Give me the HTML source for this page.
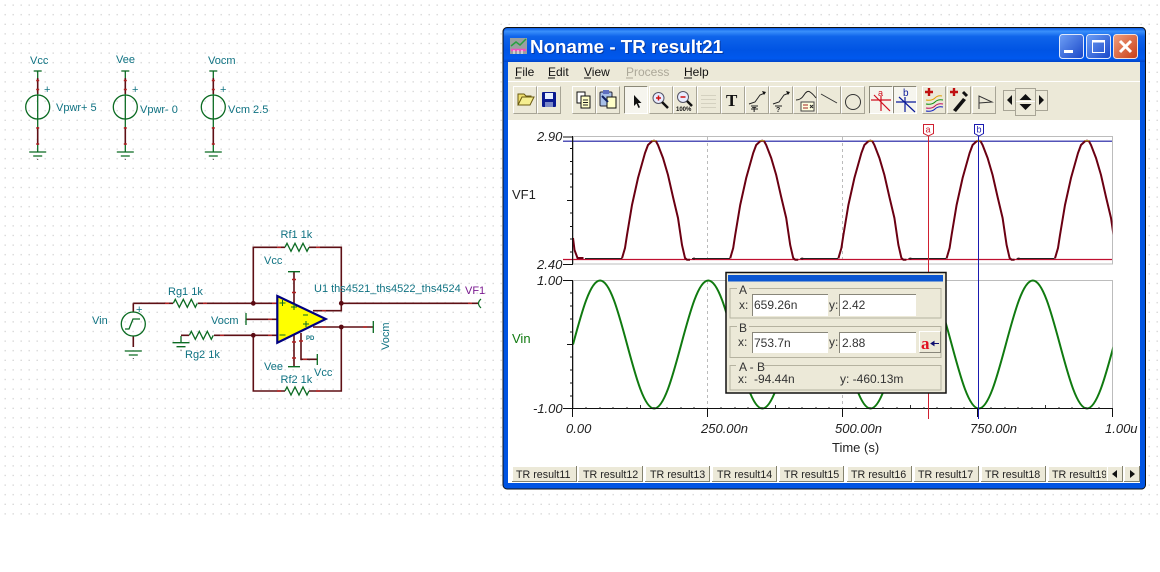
<!DOCTYPE html>
<html><head><meta charset="utf-8"><title>Noname - TR result21</title>
<style>
html,body{margin:0;padding:0;background:#fff;width:1160px;height:572px;overflow:hidden}
svg{display:block}
text{font-family:"Liberation Sans",sans-serif}
.s{font-size:11px;fill:#0f7282}
.m{font-size:12px;fill:#111}
.ax{font-size:13px;fill:#222;font-style:italic}
.t{font-size:10.7px;fill:#222}
.w{stroke:#5e0f14;stroke-width:1.6;fill:none}
.g{stroke:#0b6b22;stroke-width:1.3;fill:none}
.r{stroke:#b02020;stroke-width:1.4;fill:none}
.d{font-size:12px;fill:#333}
</style></head><body>
<svg width="1160" height="572" viewBox="0 0 1160 572" xmlns="http://www.w3.org/2000/svg">
<defs>
<pattern id="dots" x="0" y="0" width="8" height="9.6" patternUnits="userSpaceOnUse"><rect x="4.5" y="4.5" width="1.4" height="1.2" fill="#d2d2d2"/></pattern>
<linearGradient id="tb" x1="0" y1="0" x2="0" y2="1"><stop offset="0" stop-color="#0a5be4"/><stop offset=".1" stop-color="#3a90fb"/><stop offset=".25" stop-color="#0f64ea"/><stop offset=".65" stop-color="#0054e4"/><stop offset=".9" stop-color="#0058ee"/><stop offset="1" stop-color="#0044c8"/></linearGradient>
<linearGradient id="bb" x1="0" y1="0" x2="1" y2="1"><stop offset="0" stop-color="#6fa0f5"/><stop offset="1" stop-color="#1846c8"/></linearGradient>
<linearGradient id="bc" x1="0" y1="0" x2="1" y2="1"><stop offset="0" stop-color="#f0a080"/><stop offset="1" stop-color="#c83c14"/></linearGradient>
<clipPath id="c1"><rect x="573" y="130" width="539.5" height="136"/></clipPath>
<clipPath id="c2"><rect x="573" y="275" width="539.5" height="136"/></clipPath>
<g id="hump"><path d="M-32 258.3L-29 248-27 235-22 205-16 178-9 153-6 145-2 141.3 0 140.7 2 141.3 4 145 9 158 14 175 19 197 24 218 28 245 31 258 33 259.8 36 259.8 M39 258.6h2" fill="none" stroke="#6b0012" stroke-width="2"/><path d="M-2 140.7h4" stroke="#b8b030" stroke-width="1" fill="none"/><path d="M38 258.5H76" stroke="#222" stroke-width="1"/></g>
<path id="res" d="M0 0l2-4 4 8 4-8 4 8 4-8 4 8 2-4" fill="none" stroke="#0b6b22" stroke-width="1.3"/>
<g id="gnd"><path d="M-8.500 0h17M-4.500 4h9" class="g"/><rect x="-.5" y="7" width="1" height="1" fill="#444"/></g>
<g id="src"><path d="M-4 0h8" class="g"/><path d="M0 0v7" class="g"/><path d="M0 7V23" class="w"/><path d="M-1.500 9.500h3M-1.500 18.500h3" class="r"/><circle cx="0" cy="36" r="12" class="g"/><path d="M0 23V49" class="g"/><path d="M0 49v7" class="g"/><path d="M0 56V74" class="w"/><path d="M-1.500 57h3M-1.500 73h3" class="r"/><path d="M0 74v7" class="g"/><use href="#gnd" y="81"/></g>
<g id="tb1"><rect x="0" y="0" width="24" height="28" fill="#ece9d8"/><path d="M.5 27.500V.5H23.500" fill="none" stroke="#fff"/><path d="M.5 27.500H23.500V.5" fill="none" stroke="#a8a596"/></g>
<g id="tbp"><rect x="0" y="0" width="24" height="28" fill="#f6f5ee"/><path d="M.5 27.500V.5H23.500" fill="none" stroke="#8a8878"/><path d="M.5 27.500H23.500V.5" fill="none" stroke="#fff"/></g>
</defs>
<rect width="1160" height="572" fill="#fff"/>
<rect width="1160" height="520" fill="url(#dots)"/>

<!-- Power sources -->
<use href="#src" x="37.700" y="71"/><use href="#src" x="125.300" y="71"/><use href="#src" x="213.300" y="71"/>
<text class="s" x="30" y="64">Vcc</text><text class="s" x="116" y="63">Vee</text><text class="s" x="208" y="64">Vocm</text>
<text class="s" x="56" y="111">Vpwr+ 5</text><text class="s" x="140" y="113">Vpwr- 0</text><text class="s" x="228" y="113">Vcm 2.5</text>
<text class="s" x="44" y="93">+</text><text class="s" x="132" y="93">+</text><text class="s" x="220" y="93">+</text>

<!-- Amp circuit wires -->
<path class="w" d="M133.300 303.300H173M198 303.300H277M253.300 303.300V247.300H285M309 247.300H341.300V310.700H313M341.300 303.300H478M181 335.300H189M214 335.300H277M253.300 335.300V391H285M309 391H341.300V327H313M341.300 327H373M246 319.300H277M294 272V304M294 333V367M301 333V359.300H317"/>
<path class="r" d="M165 303.300h4M203 303.300h4M272 303.300h4M277 247.300h4M316 247.300h4M277 391h4M316 391h4M220 335.300h4M268 335.300h4M268 319.300h4M322 310.700h4M322 327h4M363 327h4M468 303.300h4M292 279.500h4M292 292.500h4M292 342h4M292 358h4M299 341h4M303 359.300h4"/>
<path class="g" d="M288 271.700h12M288 366.700h12M246 313v12M373.300 321v12M317.300 354v11"/>
<use href="#res" x="285" y="247.300"/><use href="#res" x="285" y="391"/><use href="#res" x="173.300" y="303.300"/><use href="#res" x="189.300" y="335.300"/>
<use href="#gnd" x="181" y="342.700"/><path class="g" d="M181 336V343"/>
<circle cx="253.300" cy="303.300" r="2.400" fill="#5a0a12"/><circle cx="341.300" cy="303.300" r="2.400" fill="#5a0a12"/><circle cx="253.300" cy="335.300" r="2.400" fill="#5a0a12"/><circle cx="341.300" cy="327" r="2.400" fill="#5a0a12"/>
<path d="M481 299Q476 303.300 481 308" fill="none" stroke="#0b6b22" stroke-width="1.200"/>
<polygon points="277.300,296 277.300,342.700 325.700,319" fill="#ffff00" stroke="#000080" stroke-width="2.200"/>
<path d="M279.500 303h6M282.500 300v6M291 307h6M294 304v6M303 315h5M303 324h6M306 321v6M279.500 335h6" stroke="#0b6b22" stroke-width="1" fill="none"/>
<!-- Vin -->
<path class="w" d="M133.300 303.300V312M133.300 336V347"/>
<circle cx="133.300" cy="324" r="12" class="g"/>
<path class="g" d="M125 329h4l4-10h7" stroke-width="1.500"/>
<use href="#gnd" x="133.300" y="351"/>
<text class="s" x="136" y="313">+</text>
<text class="s" x="92" y="324">Vin</text><text class="s" x="168" y="295">Rg1 1k</text><text class="s" x="185" y="358">Rg2 1k</text><text class="s" x="280.500" y="238">Rf1 1k</text><text class="s" x="280.500" y="383">Rf2 1k</text>
<text class="s" x="264" y="264">Vcc</text><text class="s" x="211" y="324">Vocm</text><text class="s" x="264" y="370">Vee</text><text class="s" x="314" y="376">Vcc</text>
<text class="s" x="314" y="292">U1 ths4521_ths4522_ths4524</text>
<text x="465" y="294" style="font-size:11px;fill:#7a1a90">VF1</text>
<text x="306" y="340" style="font-size:6px;font-weight:bold;fill:#0f7282">PD</text>
<text class="s" transform="translate(389,350) rotate(-90)">Vocm</text>

<!-- Window -->
<rect x="503" y="27.500" width="642.500" height="461.500" rx="4" fill="#0054e3" stroke="#111" stroke-width="1"/>
<path d="M504 62V33q0-5 5-5H1140q5 0 5 5V62Z" fill="url(#tb)"/>
<rect x="508" y="62" width="632" height="58" fill="#ece9d8"/>
<rect x="508" y="81" width="632" height="1" fill="#fff"/>
<rect x="508" y="120" width="632" height="363" fill="#fff"/>
<rect x="1146.500" y="28" width="1" height="462" fill="#fff"/>
<!-- title icon -->
<rect x="510" y="38" width="17" height="16" fill="#9aa0a0"/><path d="M511 46l5-4 4 3 6-6" stroke="#28a040" fill="none" stroke-width="1.500"/><path d="M511 50h15" stroke="#f050c0" stroke-width="2.500"/><path d="M514 50v4M518 50v4M522 50v4" stroke="#fff" stroke-width="1"/>
<text x="531" y="54" style="font-size:18.800px;font-weight:bold;fill:#0a2a80" opacity=".7">Noname - TR result21</text>
<text x="530" y="53" style="font-size:18.800px;font-weight:bold;fill:#fff">Noname - TR result21</text>
<!-- title buttons -->
<rect x="1059.500" y="34.500" width="24" height="24" rx="3" fill="url(#bb)" stroke="#dfe8fb"/><rect x="1064" y="50" width="9" height="3" fill="#fff"/>
<rect x="1086.500" y="34.500" width="24" height="24" rx="3" fill="url(#bb)" stroke="#dfe8fb"/><rect x="1092.500" y="41.500" width="12" height="11" fill="none" stroke="#fff" stroke-width="1"/><rect x="1092" y="40" width="13" height="2.500" fill="#fff"/>
<rect x="1113.500" y="34.500" width="24" height="24" rx="3" fill="url(#bc)" stroke="#f3e0da"/><path d="M1120 41l11 11M1131 41l-11 11" stroke="#fff" stroke-width="3"/>
<!-- menu -->
<text class="m" x="515" y="76">File</text><path d="M515 78h6" stroke="#111"/>
<text class="m" x="548" y="76">Edit</text><path d="M548 78h7" stroke="#111"/>
<text class="m" x="584" y="76">View</text><path d="M584 78h7" stroke="#111"/>
<text x="626" y="76" style="font-size:12px;fill:#aca899">Process</text><path d="M626 78h7" stroke="#aca899"/>
<text class="m" x="684" y="76">Help</text><path d="M684 78h8" stroke="#111"/>
<!-- toolbar buttons -->
<use href="#tb1" x="513" y="86"/><use href="#tb1" x="537" y="86"/>
<use href="#tb1" x="572" y="86"/><use href="#tb1" x="596" y="86"/>
<use href="#tbp" x="624" y="86"/>
<use href="#tb1" x="649" y="86"/><use href="#tb1" x="673" y="86"/><use href="#tb1" x="697" y="86"/><use href="#tb1" x="721" y="86"/><use href="#tb1" x="745" y="86"/><use href="#tb1" x="769" y="86"/><use href="#tb1" x="793" y="86"/><use href="#tb1" x="817" y="86"/><use href="#tb1" x="841" y="86"/>
<use href="#tbp" x="869" y="86"/><use href="#tbp" x="893" y="86"/>
<use href="#tb1" x="922" y="86"/><use href="#tb1" x="947" y="86"/><use href="#tb1" x="972" y="86"/>
<rect x="1003.500" y="90.500" width="12" height="20" fill="#ece9d8" stroke="#a8a596"/><rect x="1035.500" y="90.500" width="12" height="20" fill="#ece9d8" stroke="#a8a596"/>
<rect x="1015.500" y="88.500" width="20" height="27" fill="#ece9d8" stroke="#a8a596"/><path d="M1016 101.500h19" stroke="#fff"/>
<path d="M1007 100l5-5v10zM1044 100l-5-5v10zM1025.500 94l6 6h-12zM1025.500 110l6-6h-12z" fill="#111"/>
<!-- icons -->
<path d="M518 105V94h6l2 2h5v2" fill="#f0e070" stroke="#6a5a10"/><path d="M518 105l4-8h12l-4 8z" fill="#f5ee90" stroke="#6a5a10"/>
<rect x="542" y="92" width="14" height="15" rx="1" fill="#0a1a90"/><rect x="545" y="93" width="8" height="6" fill="#e8f0ff"/><rect x="545" y="102" width="8" height="5" fill="#7a88c8"/>
<rect x="577" y="92" width="8" height="11" fill="#fff" stroke="#111"/><rect x="581" y="96" width="9" height="12" fill="#ffffc8" stroke="#111"/><path d="M583 100h5M583 102.500h5M583 105h5" stroke="#222"/>
<rect x="600" y="92" width="12" height="14" rx="1" fill="#a8c0e8" stroke="#223"/><rect x="603" y="90" width="6" height="4" fill="#6070c0"/><rect x="607" y="97" width="9" height="11" fill="#ffffc8" stroke="#111"/><path d="M602 96l6 6" stroke="#102060" stroke-width="2"/>
<path d="M634 95v11l2.500-2.500 2 4.500 1.500-.8-2-4.200h3.500z" fill="#111"/>
<circle cx="658.500" cy="98" r="5.500" fill="#e8ecff" stroke="#556"/><path d="M656 98h5M658.500 95.500v5" stroke="#d01010" stroke-width="1.500"/><path d="M662 102l6 6" stroke="#111" stroke-width="2.500"/>
<circle cx="683" cy="97" r="5.500" fill="#e8ecff" stroke="#556"/><path d="M680.500 97h5" stroke="#d01010" stroke-width="1.500"/><path d="M687 101l5 5" stroke="#111" stroke-width="2.500"/><text x="676" y="111" style="font-size:6px;font-weight:bold;fill:#111">100%</text>
<g fill="#d4d1c0"><rect x="701" y="95" width="15" height="1"/><rect x="701" y="99" width="15" height="1"/><rect x="701" y="103" width="15" height="1"/><rect x="701" y="107" width="15" height="1"/></g>
<text x="726" y="106" style="font-family:'Liberation Serif',serif;font-size:17px;font-weight:bold;fill:#111">T</text>
<path d="M749 104l6-2 5-7 5-2M751 106h7M751 109h7" fill="none" stroke="#222"/><path d="M762 91l4 1-2 3z" fill="#111"/><text x="752" y="112" style="font-size:7px;font-weight:bold;fill:#222">T</text>
<path d="M773 104l6-2 5-7 5-2M775 106h7" fill="none" stroke="#222"/><path d="M786 91l4 1-2 3z" fill="#111"/><text x="776" y="112" style="font-size:7px;font-weight:bold;fill:#222">?</text>
<path d="M796 100q5 0 8-5 3-5 6-3 3 2 6 6" fill="none" stroke="#222"/><rect x="801" y="102" width="13" height="9" fill="#ffffe0" stroke="#444"/><path d="M803 105h5M803 108h5" stroke="#a02020"/><path d="M810 105l3 3M813 105l-3 3" stroke="#222"/>
<path d="M821 94l16 9" stroke="#333"/>
<circle cx="853" cy="102" r="7.500" fill="none" stroke="#333"/>
<path d="M871 100h20M874 95l16 16M881 96v15" stroke="#d01020" stroke-width="1.200" fill="none"/><text x="878" y="96" style="font-size:9px;fill:#d01020">a</text>
<path d="M896 102h20M899 97l16 15M905 97v15" stroke="#0a1a9a" stroke-width="1.200" fill="none"/><text x="903" y="96" style="font-size:10px;fill:#0a1a9a">b</text>
<path d="M925 92h8M929 88v8" stroke="#c01010" stroke-width="2.400"/>
<path d="M926 100q6 1 9-2t7-2" stroke="#e0a000" fill="none"/><path d="M926 104q6 1 9-2t8-2" stroke="#109010" fill="none"/><path d="M926 108q6 1 9-2t8-2" stroke="#c01060" fill="none"/><path d="M926 111q6 1 9-2t8-2" stroke="#1020c0" fill="none"/>
<path d="M950 92h8M954 88v8" stroke="#c01010" stroke-width="2.400"/><path d="M953 110l10-12 3 2-10 12z" fill="#111"/><path d="M963 92l4 4" stroke="#111" stroke-width="3"/>
<path d="M979 109V96l13 6-13 1" fill="none" stroke="#333"/>

<!-- Plot 1 -->
<rect x="573.500" y="136.500" width="539" height="127.500" fill="#fff" stroke="#bcbcbc"/>
<path d="M707.500 137V263M842.500 137V263" stroke="#bbb" stroke-dasharray="3 3"/>
<path d="M563 141.200H1112" stroke="#1a1aa0" stroke-width="1.200"/>
<path d="M563 259.500H1112" stroke="#c01030" stroke-width="1.200"/>
<g clip-path="url(#c1)"><path d="M573 238l1.500 12 3 8h6" stroke="#6b0012" fill="none" stroke-width="2"/><path d="M585 258.500H622" stroke="#222"/>
<use href="#hump" x="654"/><use href="#hump" x="762.200"/><use href="#hump" x="870.400"/><use href="#hump" x="978.600"/><use href="#hump" x="1087"/></g>
<path d="M572.500 136V264" stroke="#111"/><path d="M563 137h10M563 264.500h10" stroke="#111"/>
<path d="M570 148.500h2.500M570 161.500h2.500M570 174h2.500M570 187h2.500M567 200.500h5.500M570 213h2.500M570 226.500h2.500M570 239h2.500M570 252h2.500" stroke="#111"/>
<text class="ax" x="537" y="141">2.90</text><text class="ax" x="537" y="269">2.40</text>
<text x="512" y="199" style="font-size:13px;fill:#222">VF1</text>

<!-- Plot 2 -->
<rect x="573.500" y="280.500" width="539" height="128" fill="#fff" stroke="#bcbcbc"/>
<path d="M707.500 281V408M842.500 281V408" stroke="#bbb" stroke-dasharray="3 3"/>
<g clip-path="url(#c2)"><path fill="none" stroke="#107a10" stroke-width="2" d="M573 344.500c8.820-32.800 17.260-64 27.050-64c9.790 0 18.230 31.200 27.050 64c8.820 32.800 17.260 64 27.050 64c9.790 0 18.230-31.200 27.050-64c8.820-32.800 17.260-64 27.050-64c9.790 0 18.230 31.200 27.050 64c8.820 32.800 17.260 64 27.050 64c9.790 0 18.230-31.200 27.050-64c8.820-32.800 17.260-64 27.050-64c9.790 0 18.230 31.200 27.050 64c8.820 32.800 17.260 64 27.050 64c9.790 0 18.230-31.200 27.050-64c8.820-32.800 17.260-64 27.050-64c9.790 0 18.230 31.200 27.050 64c8.820 32.800 17.260 64 27.050 64c9.790 0 18.230-31.200 27.050-64c8.820-32.800 17.260-64 27.050-64c9.790 0 18.230 31.200 27.050 64c8.820 32.800 17.260 64 27.050 64c9.790 0 18.230-31.200 27.050-64"/></g>
<path d="M572.500 280V417" stroke="#111"/><path d="M563 280.500h10M563 408.500H1112.500" stroke="#111"/>
<path d="M570 293h2.500M570 306h2.500M570 319h2.500M570 332h2.500M567 344.500h5.500M570 357h2.500M570 370h2.500M570 383h2.500M570 396h2.500" stroke="#111"/>
<path d="M707.500 408v9M842.500 408v9M977.500 408v9M1112.500 408v9" stroke="#111"/>
<path d="M640.500 405v3M775.500 405v3M910.500 405v3M1045.500 405v3M586 407v1.500M600 407v1.500M613 407v1.500M627 407v1.500M654 407v1.500M667 407v1.500M681 407v1.500M694 407v1.500M721 407v1.500M735 407v1.500M748 407v1.500M762 407v1.500M789 407v1.500M802 407v1.500M816 407v1.500M829 407v1.500M856 407v1.500M870 407v1.500M883 407v1.500M897 407v1.500M924 407v1.500M937 407v1.500M951 407v1.500M964 407v1.500M991 407v1.500M1005 407v1.500M1018 407v1.500M1032 407v1.500M1059 407v1.500M1072 407v1.500M1086 407v1.500M1099 407v1.500" stroke="#333"/>
<text class="ax" x="537" y="285">1.00</text><text class="ax" x="533" y="413">-1.00</text>
<text x="512" y="343" style="font-size:13px;fill:#107a10">Vin</text>
<text class="ax" x="566" y="433">0.00</text><text class="ax" x="701" y="433">250.00n</text><text class="ax" x="835" y="433">500.00n</text><text class="ax" x="970" y="433">750.00n</text><text class="ax" x="1105" y="433">1.00u</text>
<text x="832" y="452" style="font-size:13px;fill:#222">Time (s)</text>

<!-- Cursors -->
<path d="M928.500 135V419" stroke="#d02030" stroke-width="1"/><path d="M978.500 135V419" stroke="#1a1ab0" stroke-width="1"/>
<path d="M923.500 124.500h10v9l-5 2.500-5-2.500z" fill="#fff" stroke="#d02030"/><text x="925.500" y="132.500" style="font-size:9px;fill:#d02030">a</text>
<path d="M974.500 124.500h9v9l-4.500 2.500-4.500-2.500z" fill="#fff" stroke="#1a1ab0"/><text x="976.500" y="132.500" style="font-size:9px;fill:#1a1ab0">b</text>

<!-- Dialog -->
<rect x="726" y="272.500" width="220" height="120.500" fill="#ece9d8" stroke="#111" stroke-width="1.500"/>
<rect x="728" y="275" width="215" height="6.500" fill="#0a55d0"/>
<g fill="none" stroke="#b5b2a0"><rect x="730" y="288.500" width="211" height="29.500"/><rect x="730" y="326.500" width="211" height="31"/><rect x="730" y="365.500" width="211" height="24.500"/></g>
<rect x="737" y="283" width="12" height="10" fill="#ece9d8"/><rect x="737" y="321" width="12" height="10" fill="#ece9d8"/><rect x="736" y="360" width="28" height="10" fill="#ece9d8"/>
<text class="d" x="739" y="294">A</text><text class="d" x="739" y="332">B</text><text class="d" x="739" y="371">A - B</text>
<text class="d" x="739" y="309">x:</text><text class="d" x="829" y="309">y:</text><text class="d" x="738" y="346">x:</text><text class="d" x="829" y="346">y:</text>
<g fill="#fff"><rect x="752" y="294" width="76" height="22"/><rect x="839" y="294" width="77" height="22"/><rect x="752" y="332" width="76" height="21"/><rect x="839" y="332" width="77" height="21"/></g>
<g fill="none" stroke="#88867a"><path d="M752.500 316V294.500H828"/><path d="M839.500 316V294.500H916"/><path d="M752.500 353V332.500H828"/><path d="M839.500 353V332.500H916"/></g>
<text class="d" x="754" y="309">659.26n</text><text class="d" x="842" y="309">2.42</text><text class="d" x="754" y="347">753.7n</text><text class="d" x="842" y="347">2.88</text>
<rect x="919.500" y="331.500" width="21" height="21" fill="#ece9d8"/><path d="M919.500 352.500V331.500H940.500" fill="none" stroke="#fff"/><path d="M919.500 352.500H940.500V331.500" fill="none" stroke="#88867a"/>
<text x="921" y="349" style="font-family:'Liberation Serif',serif;font-size:17px;font-weight:bold;fill:#e01020">a</text>
<path d="M931 343.500h8M931 343.500l3-2v4z" stroke="#101070" fill="#101070"/>
<text class="d" x="738" y="383">x:</text><text class="d" x="754" y="383">-94.44n</text><text class="d" x="840" y="383">y: -460.13m</text>

<!-- Tabs -->
<g fill="#ece9d8">
<rect x="512" y="466" width="65" height="16"/><rect x="578" y="466" width="65" height="16"/><rect x="645" y="466" width="65" height="16"/><rect x="712" y="466" width="65" height="16"/><rect x="779" y="466" width="65" height="16"/><rect x="847" y="466" width="65" height="16"/><rect x="914" y="466" width="65" height="16"/><rect x="981" y="466" width="65" height="16"/><rect x="1048" y="466" width="60" height="16"/></g>
<path fill="none" stroke="#fff" d="M512.500 482V466.500H577M578.500 482V466.500H643M645.500 482V466.500H710M712.500 482V466.500H777M779.500 482V466.500H844M847.500 482V466.500H912M914.500 482V466.500H979M981.500 482V466.500H1046M1048.500 482V466.500H1108"/>
<path fill="none" stroke="#85836f" d="M512 481.500H576.500V466M578 481.500H642.500V466M645 481.500H709.500V466M712 481.500H776.500V466M779 481.500H843.500V466M847 481.500H911.500V466M914 481.500H978.500V466M981 481.500H1045.500V466M1048 481.500H1107"/>
<text class="t" x="516" y="478">TR result11</text><text class="t" x="583" y="478">TR result12</text><text class="t" x="650" y="478">TR result13</text><text class="t" x="717" y="478">TR result14</text><text class="t" x="784" y="478">TR result15</text><text class="t" x="851" y="478">TR result16</text><text class="t" x="918" y="478">TR result17</text><text class="t" x="985" y="478">TR result18</text>
<svg x="1047" y="466" width="59" height="16"><text class="t" x="5" y="12">TR result19</text></svg>
<g fill="#ece9d8"><rect x="1107" y="466" width="16" height="16"/><rect x="1124" y="466" width="16" height="16"/></g>
<path fill="none" stroke="#fff" d="M1107.500 482V466.500H1123M1124.500 482V466.500H1140"/>
<path fill="none" stroke="#85836f" d="M1107 481.500H1122.500V466M1124 481.500H1139.500V466"/>
<path d="M1112 474l5-4v8zM1135 474l-5-4v8z" fill="#111"/>
</svg>
</body></html>
